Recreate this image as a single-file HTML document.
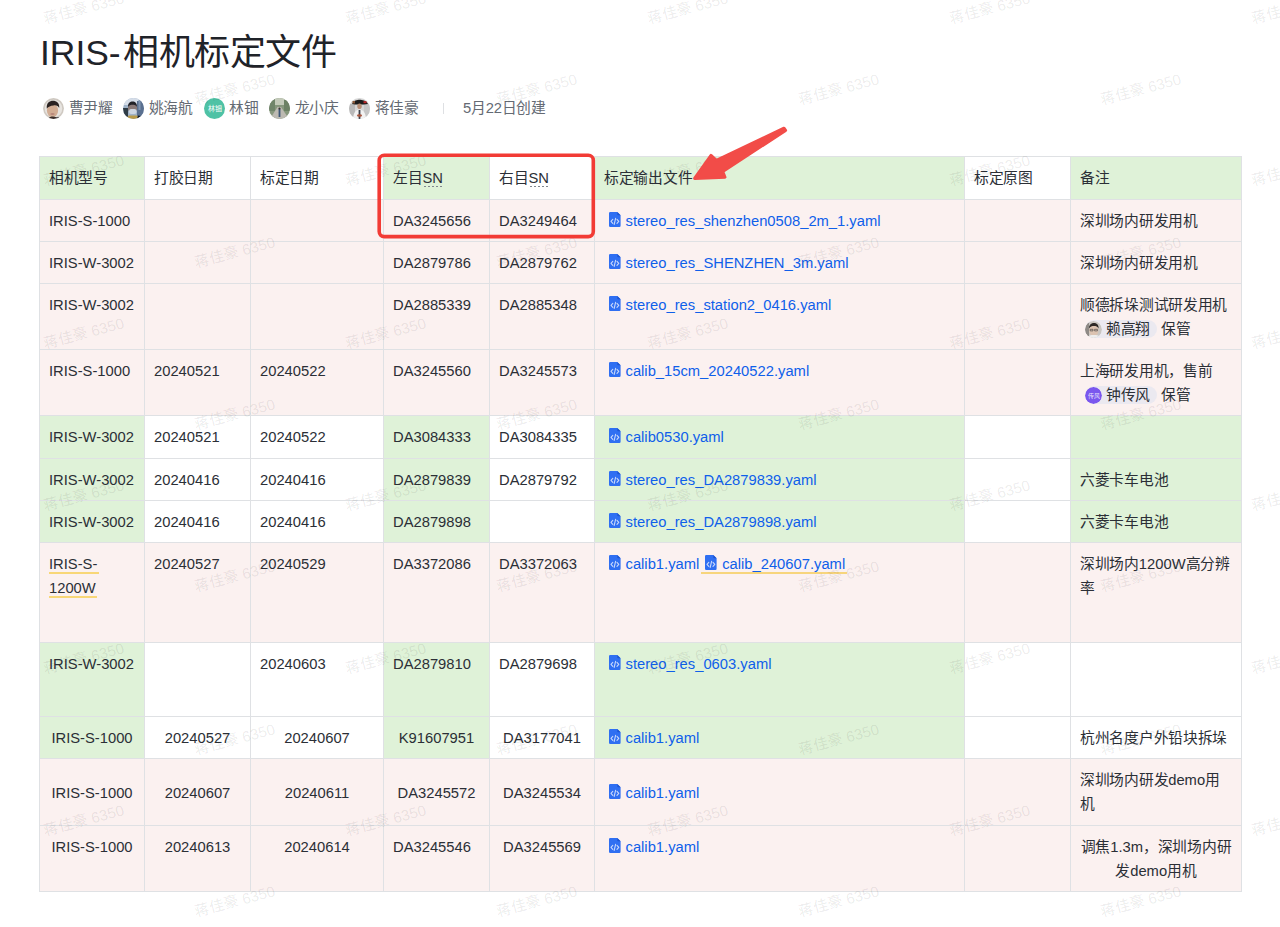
<!DOCTYPE html>
<html lang="zh-CN"><head><meta charset="utf-8">
<style>
html,body{margin:0;padding:0;background:#fff;}
body{width:1280px;height:927px;overflow:hidden;position:relative;font-family:"Liberation Sans",sans-serif;color:#1f2329;}
.title{position:absolute;left:40px;top:28px;font-size:36px;line-height:50px;white-space:nowrap;color:#1f2329;}
.meta{position:absolute;left:0;top:96px;height:24px;font-size:14.75px;line-height:24px;color:#646a73;white-space:nowrap;}
.meta span{position:absolute;top:0;letter-spacing:-0.25px;}
.av{position:absolute;width:21px;height:21px;top:1.5px;}
.cb{position:absolute;}
.ln{position:absolute;background:#dfe1e4;}
.cell{position:absolute;box-sizing:border-box;padding:9px 9px 8px 9px;font-size:14.75px;line-height:24px;display:flex;flex-direction:column;color:#2b2f36;}
.cell.top{justify-content:flex-start;}
.cell.middle{justify-content:center;}
.ci{white-space:nowrap;}
.cj{letter-spacing:-0.3px;}
.lk{color:#0f5fea;white-space:nowrap;padding-left:4.5px;margin-right:1.4px;}
.fi{display:inline-block;vertical-align:-1px;margin-right:5px;}
.ul .lt, .ul{}
.ul{border-bottom:2px solid #f7d57c;padding-bottom:0px;padding-right:1.6px;}
.yl{border-bottom:2px solid #f8d777;padding-right:1.2px;}
.dot{position:relative;display:inline-block;}
.dot::after{content:"";position:absolute;left:1.5px;right:-1px;top:20px;height:1px;background-image:linear-gradient(90deg,#80868e 0 2px,transparent 2px 4px);background-size:4px 1px;background-repeat:repeat-x;}
.mt{display:inline-block;background:#ebe9f0;border-radius:10px;height:18px;line-height:18px;padding:0 6.7px 0 0;margin-left:5px;vertical-align:0px;}
.mav{display:inline-block;width:17px;height:17px;border-radius:50%;vertical-align:-4px;margin-right:4px;}
.av-lai{background:radial-gradient(circle at 50% 60%, #d9c1ae 0 30%, #5b5450 45%, #c9c9c9 70%);}
.av-zhong{background:#7b5cf0;}
.wm{position:absolute;font-size:15px;line-height:16px;color:rgba(0,0,0,0.085);transform:rotate(-15deg);transform-origin:0 100%;white-space:nowrap;pointer-events:none;}
.anno{position:absolute;left:0;top:0;}
</style></head><body>
<div class="title"><span style="font-size:35.4px">IRIS-</span><span style="letter-spacing:-0.45px;margin-left:2.5px">相机标定文件</span></div>
<div class="meta">
<svg class="av" style="left:43px" width="21" height="21" viewBox="0 0 21 21"><defs><clipPath id="c1"><circle cx="10.5" cy="10.5" r="10.5"/></clipPath><filter id="b1" x="-20%" y="-20%" width="140%" height="140%"><feGaussianBlur stdDeviation="0.55"/></filter></defs><g clip-path="url(#c1)"><rect width="21" height="21" fill="#e7e4e0"/><g filter="url(#b1)"><circle cx="10.5" cy="10.5" r="9.6" fill="none" stroke="#cfc9c2" stroke-width="1.6"/><ellipse cx="9.5" cy="12.5" rx="5.6" ry="6.6" fill="#d2ad94"/><path d="M3.8 10.5C3.2 5 6.5 2.8 10 2.8S16.8 4.8 16.2 10C15 8 13.5 7 10.5 7.4S5.5 8.5 3.8 10.5z" fill="#2a2421"/><ellipse cx="9.5" cy="16" rx="2.2" ry="1" fill="#a8706a" opacity="0.6"/><path d="M5 21C6 19 8 18.6 10 18.6S15 19.5 17 21z" fill="#3a2f2c"/><path d="M13 21L15 19L18 20L18 21z" fill="#1f2230"/></g></g></svg>
<span style="left:68.5px">曹尹耀</span>
<svg class="av" style="left:123px" width="21" height="21" viewBox="0 0 21 21"><defs><clipPath id="c2"><circle cx="10.5" cy="10.5" r="10.5"/></clipPath><filter id="b2" x="-20%" y="-20%" width="140%" height="140%"><feGaussianBlur stdDeviation="0.6"/></filter></defs><g clip-path="url(#c2)"><rect width="21" height="21" fill="#9fb2c8"/><g filter="url(#b2)"><rect x="0" y="0" width="21" height="7" fill="#d5dde8"/><rect x="14" y="3" width="7" height="18" fill="#5a7090"/><rect x="15.5" y="2" width="2" height="10" fill="#8096b2"/><rect x="0" y="10" width="5" height="11" fill="#2e3a44"/><ellipse cx="9.5" cy="10" rx="4.6" ry="5.5" fill="#8a7a78"/><path d="M5 9C5 5 7 3.6 9.6 3.6S14 5 14 9C13 7.2 11.5 6.8 9.6 6.8S6 7.2 5 9z" fill="#202028"/><rect x="6" y="11" width="7.5" height="5" rx="2" fill="#cdd6e2"/><path d="M3 21L5.5 17.5H14L17 21z" fill="#b89a48"/><path d="M14 21L15 17.5L18 18L18 21z" fill="#111820"/></g></g></svg>
<span style="left:148.5px">姚海航</span>
<svg class="av" style="left:203.5px" width="21" height="21" viewBox="0 0 21 21"><circle cx="10.5" cy="10.5" r="10.5" fill="#4fc2a5"/><text x="10.5" y="13.2" font-size="7" fill="#fff" text-anchor="middle" font-family="Liberation Sans,sans-serif">林钿</text></svg>
<span style="left:229px">林钿</span>
<svg class="av" style="left:269px" width="21" height="21" viewBox="0 0 21 21"><defs><clipPath id="c4"><circle cx="10.5" cy="10.5" r="10.5"/></clipPath></defs><g clip-path="url(#c4)"><rect width="21" height="21" fill="#86977c"/><rect x="6" y="0" width="9" height="7" fill="#c3cab9"/><rect x="0" y="0" width="6" height="13" fill="#70856a"/><rect x="15" y="2" width="6" height="11" fill="#6c8164"/><path d="M1 21L8.5 9H12L20 21z" fill="#bdbab2"/><rect x="9.6" y="11" width="1.8" height="8" fill="#3d5675"/><circle cx="10.5" cy="10.5" r="1.1" fill="#3a3430"/></g></svg>
<span style="left:294.5px">龙小庆</span>
<svg class="av" style="left:348.5px" width="21" height="21" viewBox="0 0 21 21"><defs><clipPath id="c5"><circle cx="10.5" cy="10.5" r="10.5"/></clipPath><filter id="b5" x="-20%" y="-20%" width="140%" height="140%"><feGaussianBlur stdDeviation="0.5"/></filter></defs><g clip-path="url(#c5)"><rect width="21" height="21" fill="#d6d6d6"/><g filter="url(#b5)"><rect x="0" y="6" width="6" height="15" fill="#b9b9b9"/><rect x="15" y="6" width="6" height="15" fill="#c6c6c6"/><path d="M3 6C5 2.5 8 1.8 10.5 1.8S17 2.5 19 6L15 6.5L6 6.5z" fill="#1c1c1c"/><rect x="14.5" y="3.2" width="3" height="2" fill="#c0282a"/><rect x="3.5" y="3" width="2.5" height="2.5" fill="#8a5a3a"/><ellipse cx="10.5" cy="8.2" rx="2.2" ry="2.8" fill="#b88e74"/><path d="M4 21C4.5 14 7 11.8 10.5 11.8S16.5 14 17 21z" fill="#f2f2f2"/><rect x="9.6" y="12" width="1.8" height="9" fill="#3b3f4a"/><ellipse cx="10.5" cy="17.5" rx="2.6" ry="1.2" fill="#a8563e"/></g></g></svg>
<span style="left:374.5px">蒋佳豪</span>
<div style="position:absolute;left:443px;top:7px;width:1px;height:11px;background:#dee0e3"></div>
<span style="left:463px">5月22日创建</span>
</div>
<div class="cb" style="left:39px;top:156px;width:105px;height:43px;background:#dff2d8"></div>
<div class="cb" style="left:144px;top:156px;width:106px;height:43px;background:#ffffff"></div>
<div class="cb" style="left:250px;top:156px;width:133px;height:43px;background:#ffffff"></div>
<div class="cb" style="left:383px;top:156px;width:106px;height:43px;background:#dff2d8"></div>
<div class="cb" style="left:489px;top:156px;width:105px;height:43px;background:#ffffff"></div>
<div class="cb" style="left:594px;top:156px;width:370px;height:43px;background:#dff2d8"></div>
<div class="cb" style="left:964px;top:156px;width:106px;height:43px;background:#ffffff"></div>
<div class="cb" style="left:1070px;top:156px;width:171px;height:43px;background:#dff2d8"></div>
<div class="cb" style="left:39px;top:199px;width:105px;height:42px;background:#fbf1f0"></div>
<div class="cb" style="left:144px;top:199px;width:106px;height:42px;background:#fbf1f0"></div>
<div class="cb" style="left:250px;top:199px;width:133px;height:42px;background:#fbf1f0"></div>
<div class="cb" style="left:383px;top:199px;width:106px;height:42px;background:#fbf1f0"></div>
<div class="cb" style="left:489px;top:199px;width:105px;height:42px;background:#fbf1f0"></div>
<div class="cb" style="left:594px;top:199px;width:370px;height:42px;background:#fbf1f0"></div>
<div class="cb" style="left:964px;top:199px;width:106px;height:42px;background:#fbf1f0"></div>
<div class="cb" style="left:1070px;top:199px;width:171px;height:42px;background:#fbf1f0"></div>
<div class="cb" style="left:39px;top:241px;width:105px;height:42px;background:#fbf1f0"></div>
<div class="cb" style="left:144px;top:241px;width:106px;height:42px;background:#fbf1f0"></div>
<div class="cb" style="left:250px;top:241px;width:133px;height:42px;background:#fbf1f0"></div>
<div class="cb" style="left:383px;top:241px;width:106px;height:42px;background:#fbf1f0"></div>
<div class="cb" style="left:489px;top:241px;width:105px;height:42px;background:#fbf1f0"></div>
<div class="cb" style="left:594px;top:241px;width:370px;height:42px;background:#fbf1f0"></div>
<div class="cb" style="left:964px;top:241px;width:106px;height:42px;background:#fbf1f0"></div>
<div class="cb" style="left:1070px;top:241px;width:171px;height:42px;background:#fbf1f0"></div>
<div class="cb" style="left:39px;top:283px;width:105px;height:66px;background:#fbf1f0"></div>
<div class="cb" style="left:144px;top:283px;width:106px;height:66px;background:#fbf1f0"></div>
<div class="cb" style="left:250px;top:283px;width:133px;height:66px;background:#fbf1f0"></div>
<div class="cb" style="left:383px;top:283px;width:106px;height:66px;background:#fbf1f0"></div>
<div class="cb" style="left:489px;top:283px;width:105px;height:66px;background:#fbf1f0"></div>
<div class="cb" style="left:594px;top:283px;width:370px;height:66px;background:#fbf1f0"></div>
<div class="cb" style="left:964px;top:283px;width:106px;height:66px;background:#fbf1f0"></div>
<div class="cb" style="left:1070px;top:283px;width:171px;height:66px;background:#fbf1f0"></div>
<div class="cb" style="left:39px;top:349px;width:105px;height:66px;background:#fbf1f0"></div>
<div class="cb" style="left:144px;top:349px;width:106px;height:66px;background:#fbf1f0"></div>
<div class="cb" style="left:250px;top:349px;width:133px;height:66px;background:#fbf1f0"></div>
<div class="cb" style="left:383px;top:349px;width:106px;height:66px;background:#fbf1f0"></div>
<div class="cb" style="left:489px;top:349px;width:105px;height:66px;background:#fbf1f0"></div>
<div class="cb" style="left:594px;top:349px;width:370px;height:66px;background:#fbf1f0"></div>
<div class="cb" style="left:964px;top:349px;width:106px;height:66px;background:#fbf1f0"></div>
<div class="cb" style="left:1070px;top:349px;width:171px;height:66px;background:#fbf1f0"></div>
<div class="cb" style="left:39px;top:415px;width:105px;height:43px;background:#dff2d8"></div>
<div class="cb" style="left:144px;top:415px;width:106px;height:43px;background:#ffffff"></div>
<div class="cb" style="left:250px;top:415px;width:133px;height:43px;background:#ffffff"></div>
<div class="cb" style="left:383px;top:415px;width:106px;height:43px;background:#dff2d8"></div>
<div class="cb" style="left:489px;top:415px;width:105px;height:43px;background:#ffffff"></div>
<div class="cb" style="left:594px;top:415px;width:370px;height:43px;background:#dff2d8"></div>
<div class="cb" style="left:964px;top:415px;width:106px;height:43px;background:#ffffff"></div>
<div class="cb" style="left:1070px;top:415px;width:171px;height:43px;background:#dff2d8"></div>
<div class="cb" style="left:39px;top:458px;width:105px;height:42px;background:#dff2d8"></div>
<div class="cb" style="left:144px;top:458px;width:106px;height:42px;background:#ffffff"></div>
<div class="cb" style="left:250px;top:458px;width:133px;height:42px;background:#ffffff"></div>
<div class="cb" style="left:383px;top:458px;width:106px;height:42px;background:#dff2d8"></div>
<div class="cb" style="left:489px;top:458px;width:105px;height:42px;background:#ffffff"></div>
<div class="cb" style="left:594px;top:458px;width:370px;height:42px;background:#dff2d8"></div>
<div class="cb" style="left:964px;top:458px;width:106px;height:42px;background:#ffffff"></div>
<div class="cb" style="left:1070px;top:458px;width:171px;height:42px;background:#dff2d8"></div>
<div class="cb" style="left:39px;top:500px;width:105px;height:42px;background:#dff2d8"></div>
<div class="cb" style="left:144px;top:500px;width:106px;height:42px;background:#ffffff"></div>
<div class="cb" style="left:250px;top:500px;width:133px;height:42px;background:#ffffff"></div>
<div class="cb" style="left:383px;top:500px;width:106px;height:42px;background:#dff2d8"></div>
<div class="cb" style="left:489px;top:500px;width:105px;height:42px;background:#ffffff"></div>
<div class="cb" style="left:594px;top:500px;width:370px;height:42px;background:#dff2d8"></div>
<div class="cb" style="left:964px;top:500px;width:106px;height:42px;background:#ffffff"></div>
<div class="cb" style="left:1070px;top:500px;width:171px;height:42px;background:#dff2d8"></div>
<div class="cb" style="left:39px;top:542px;width:105px;height:100px;background:#fbf1f0"></div>
<div class="cb" style="left:144px;top:542px;width:106px;height:100px;background:#fbf1f0"></div>
<div class="cb" style="left:250px;top:542px;width:133px;height:100px;background:#fbf1f0"></div>
<div class="cb" style="left:383px;top:542px;width:106px;height:100px;background:#fbf1f0"></div>
<div class="cb" style="left:489px;top:542px;width:105px;height:100px;background:#fbf1f0"></div>
<div class="cb" style="left:594px;top:542px;width:370px;height:100px;background:#fbf1f0"></div>
<div class="cb" style="left:964px;top:542px;width:106px;height:100px;background:#fbf1f0"></div>
<div class="cb" style="left:1070px;top:542px;width:171px;height:100px;background:#fbf1f0"></div>
<div class="cb" style="left:39px;top:642px;width:105px;height:74px;background:#dff2d8"></div>
<div class="cb" style="left:144px;top:642px;width:106px;height:74px;background:#ffffff"></div>
<div class="cb" style="left:250px;top:642px;width:133px;height:74px;background:#ffffff"></div>
<div class="cb" style="left:383px;top:642px;width:106px;height:74px;background:#dff2d8"></div>
<div class="cb" style="left:489px;top:642px;width:105px;height:74px;background:#ffffff"></div>
<div class="cb" style="left:594px;top:642px;width:370px;height:74px;background:#dff2d8"></div>
<div class="cb" style="left:964px;top:642px;width:106px;height:74px;background:#ffffff"></div>
<div class="cb" style="left:1070px;top:642px;width:171px;height:74px;background:#ffffff"></div>
<div class="cb" style="left:39px;top:716px;width:105px;height:42px;background:#dff2d8"></div>
<div class="cb" style="left:144px;top:716px;width:106px;height:42px;background:#ffffff"></div>
<div class="cb" style="left:250px;top:716px;width:133px;height:42px;background:#ffffff"></div>
<div class="cb" style="left:383px;top:716px;width:106px;height:42px;background:#dff2d8"></div>
<div class="cb" style="left:489px;top:716px;width:105px;height:42px;background:#ffffff"></div>
<div class="cb" style="left:594px;top:716px;width:370px;height:42px;background:#dff2d8"></div>
<div class="cb" style="left:964px;top:716px;width:106px;height:42px;background:#ffffff"></div>
<div class="cb" style="left:1070px;top:716px;width:171px;height:42px;background:#ffffff"></div>
<div class="cb" style="left:39px;top:758px;width:105px;height:67px;background:#fbf1f0"></div>
<div class="cb" style="left:144px;top:758px;width:106px;height:67px;background:#fbf1f0"></div>
<div class="cb" style="left:250px;top:758px;width:133px;height:67px;background:#fbf1f0"></div>
<div class="cb" style="left:383px;top:758px;width:106px;height:67px;background:#fbf1f0"></div>
<div class="cb" style="left:489px;top:758px;width:105px;height:67px;background:#fbf1f0"></div>
<div class="cb" style="left:594px;top:758px;width:370px;height:67px;background:#fbf1f0"></div>
<div class="cb" style="left:964px;top:758px;width:106px;height:67px;background:#fbf1f0"></div>
<div class="cb" style="left:1070px;top:758px;width:171px;height:67px;background:#fbf1f0"></div>
<div class="cb" style="left:39px;top:825px;width:105px;height:66px;background:#fbf1f0"></div>
<div class="cb" style="left:144px;top:825px;width:106px;height:66px;background:#fbf1f0"></div>
<div class="cb" style="left:250px;top:825px;width:133px;height:66px;background:#fbf1f0"></div>
<div class="cb" style="left:383px;top:825px;width:106px;height:66px;background:#fbf1f0"></div>
<div class="cb" style="left:489px;top:825px;width:105px;height:66px;background:#fbf1f0"></div>
<div class="cb" style="left:594px;top:825px;width:370px;height:66px;background:#fbf1f0"></div>
<div class="cb" style="left:964px;top:825px;width:106px;height:66px;background:#fbf1f0"></div>
<div class="cb" style="left:1070px;top:825px;width:171px;height:66px;background:#fbf1f0"></div>
<div class="cell top" style="left:40px;top:157px;width:104px;height:42px;text-align:left"><div class="ci"><span class="cj">相机型号</span></div></div>
<div class="cell top" style="left:145px;top:157px;width:105px;height:42px;text-align:left"><div class="ci"><span class="cj">打胶日期</span></div></div>
<div class="cell top" style="left:251px;top:157px;width:132px;height:42px;text-align:left"><div class="ci"><span class="cj">标定日期</span></div></div>
<div class="cell top" style="left:384px;top:157px;width:105px;height:42px;text-align:left"><div class="ci"><span class="cj">左目</span><span class="dot">SN</span></div></div>
<div class="cell top" style="left:490px;top:157px;width:104px;height:42px;text-align:left"><div class="ci"><span class="cj">右目</span><span class="dot">SN</span></div></div>
<div class="cell top" style="left:595px;top:157px;width:369px;height:42px;text-align:left"><div class="ci"><span class="cj">标定输出文件</span></div></div>
<div class="cell top" style="left:965px;top:157px;width:105px;height:42px;text-align:left"><div class="ci"><span class="cj">标定原图</span></div></div>
<div class="cell top" style="left:1071px;top:157px;width:170px;height:42px;text-align:left"><div class="ci"><span class="cj">备注</span></div></div>
<div class="cell top" style="left:40px;top:200px;width:104px;height:41px;text-align:left"><div class="ci">IRIS-S-1000</div></div>
<div class="cell top" style="left:384px;top:200px;width:105px;height:41px;text-align:left"><div class="ci">DA3245656</div></div>
<div class="cell top" style="left:490px;top:200px;width:104px;height:41px;text-align:left"><div class="ci">DA3249464</div></div>
<div class="cell top" style="left:595px;top:200px;width:369px;height:41px;text-align:left"><div class="ci"><span class="lk"><svg class="fi" width="12" height="15" viewBox="0 0 12 15"><path d="M1.2 0H8.3L11.6 3.3V13.8a1.2 1.2 0 0 1-1.2 1.2H1.2A1.2 1.2 0 0 1 0 13.8V1.2A1.2 1.2 0 0 1 1.2 0z" fill="#2f6ff2"/><path d="M8.3 0V2.5a0.8 0.8 0 0 0 0.8 0.8H11.6z" fill="#1d55d0"/><path d="M3.8 7.4L2 9.4l1.8 2M8 7.4L9.8 9.4 8 11.4M6.6 6.4L5.2 12.4" stroke="#c9d8fb" stroke-width="1.1" fill="none" stroke-linecap="round" stroke-linejoin="round"/></svg><span class="lt">stereo_res_shenzhen0508_2m_1.yaml</span></span></div></div>
<div class="cell top" style="left:1071px;top:200px;width:170px;height:41px;text-align:left"><div class="ci"><span class="cj">深圳场内研发用机</span></div></div>
<div class="cell top" style="left:40px;top:242px;width:104px;height:41px;text-align:left"><div class="ci">IRIS-W-3002</div></div>
<div class="cell top" style="left:384px;top:242px;width:105px;height:41px;text-align:left"><div class="ci">DA2879786</div></div>
<div class="cell top" style="left:490px;top:242px;width:104px;height:41px;text-align:left"><div class="ci">DA2879762</div></div>
<div class="cell top" style="left:595px;top:242px;width:369px;height:41px;text-align:left"><div class="ci"><span class="lk"><svg class="fi" width="12" height="15" viewBox="0 0 12 15"><path d="M1.2 0H8.3L11.6 3.3V13.8a1.2 1.2 0 0 1-1.2 1.2H1.2A1.2 1.2 0 0 1 0 13.8V1.2A1.2 1.2 0 0 1 1.2 0z" fill="#2f6ff2"/><path d="M8.3 0V2.5a0.8 0.8 0 0 0 0.8 0.8H11.6z" fill="#1d55d0"/><path d="M3.8 7.4L2 9.4l1.8 2M8 7.4L9.8 9.4 8 11.4M6.6 6.4L5.2 12.4" stroke="#c9d8fb" stroke-width="1.1" fill="none" stroke-linecap="round" stroke-linejoin="round"/></svg><span class="lt">stereo_res_SHENZHEN_3m.yaml</span></span></div></div>
<div class="cell top" style="left:1071px;top:242px;width:170px;height:41px;text-align:left"><div class="ci"><span class="cj">深圳场内研发用机</span></div></div>
<div class="cell top" style="left:40px;top:284px;width:104px;height:65px;text-align:left"><div class="ci">IRIS-W-3002</div></div>
<div class="cell top" style="left:384px;top:284px;width:105px;height:65px;text-align:left"><div class="ci">DA2885339</div></div>
<div class="cell top" style="left:490px;top:284px;width:104px;height:65px;text-align:left"><div class="ci">DA2885348</div></div>
<div class="cell top" style="left:595px;top:284px;width:369px;height:65px;text-align:left"><div class="ci"><span class="lk"><svg class="fi" width="12" height="15" viewBox="0 0 12 15"><path d="M1.2 0H8.3L11.6 3.3V13.8a1.2 1.2 0 0 1-1.2 1.2H1.2A1.2 1.2 0 0 1 0 13.8V1.2A1.2 1.2 0 0 1 1.2 0z" fill="#2f6ff2"/><path d="M8.3 0V2.5a0.8 0.8 0 0 0 0.8 0.8H11.6z" fill="#1d55d0"/><path d="M3.8 7.4L2 9.4l1.8 2M8 7.4L9.8 9.4 8 11.4M6.6 6.4L5.2 12.4" stroke="#c9d8fb" stroke-width="1.1" fill="none" stroke-linecap="round" stroke-linejoin="round"/></svg><span class="lt">stereo_res_station2_0416.yaml</span></span></div></div>
<div class="cell top" style="left:1071px;top:284px;width:170px;height:65px;text-align:left"><div class="ci"><span class="cj">顺德拆垛测试研发用机</span><br><span class="mt"><svg class="mav" width="17" height="17" viewBox="0 0 17 17"><defs><clipPath id="cl"><circle cx="8.5" cy="8.5" r="8.5"/></clipPath></defs><g clip-path="url(#cl)"><rect width="17" height="17" fill="#c9c6c2"/><rect x="0" y="0" width="4" height="17" fill="#8f8a86"/><ellipse cx="8.8" cy="9.5" rx="4.6" ry="5.6" fill="#dcc3b1"/><path d="M4 7.5C4 3.5 6.5 2 9 2S13.8 3.5 13.6 7.5C12.5 5.5 11 5 9 5S5.2 5.5 4 7.5z" fill="#2c2826"/><path d="M5.2 8.3h2.8v1.6H5.2zM9.6 8.3h2.8v1.6H9.6z" fill="none" stroke="#3a3a3a" stroke-width="0.6"/><path d="M2 17C3 14.5 6 14 8.8 14S15 14.5 16 17z" fill="#eeeeee"/></g></svg><span class="cj">赖高翔</span></span> <span class="cj">保管</span></div></div>
<div class="cell top" style="left:40px;top:350px;width:104px;height:65px;text-align:left"><div class="ci">IRIS-S-1000</div></div>
<div class="cell top" style="left:145px;top:350px;width:105px;height:65px;text-align:left"><div class="ci">20240521</div></div>
<div class="cell top" style="left:251px;top:350px;width:132px;height:65px;text-align:left"><div class="ci">20240522</div></div>
<div class="cell top" style="left:384px;top:350px;width:105px;height:65px;text-align:left"><div class="ci">DA3245560</div></div>
<div class="cell top" style="left:490px;top:350px;width:104px;height:65px;text-align:left"><div class="ci">DA3245573</div></div>
<div class="cell top" style="left:595px;top:350px;width:369px;height:65px;text-align:left"><div class="ci"><span class="lk"><svg class="fi" width="12" height="15" viewBox="0 0 12 15"><path d="M1.2 0H8.3L11.6 3.3V13.8a1.2 1.2 0 0 1-1.2 1.2H1.2A1.2 1.2 0 0 1 0 13.8V1.2A1.2 1.2 0 0 1 1.2 0z" fill="#2f6ff2"/><path d="M8.3 0V2.5a0.8 0.8 0 0 0 0.8 0.8H11.6z" fill="#1d55d0"/><path d="M3.8 7.4L2 9.4l1.8 2M8 7.4L9.8 9.4 8 11.4M6.6 6.4L5.2 12.4" stroke="#c9d8fb" stroke-width="1.1" fill="none" stroke-linecap="round" stroke-linejoin="round"/></svg><span class="lt">calib_15cm_20240522.yaml</span></span></div></div>
<div class="cell top" style="left:1071px;top:350px;width:170px;height:65px;text-align:left"><div class="ci"><span class="cj">上海研发用机，售前</span><br><span class="mt"><svg class="mav" width="17" height="17" viewBox="0 0 17 17"><circle cx="8.5" cy="8.5" r="8.5" fill="#7b57ee"/><text x="8.5" y="11" font-size="6" fill="#fff" fill-opacity="0.85" text-anchor="middle" font-family="Liberation Sans,sans-serif">传风</text></svg><span class="cj">钟传风</span></span> <span class="cj">保管</span></div></div>
<div class="cell top" style="left:40px;top:416px;width:104px;height:42px;text-align:left"><div class="ci">IRIS-W-3002</div></div>
<div class="cell top" style="left:145px;top:416px;width:105px;height:42px;text-align:left"><div class="ci">20240521</div></div>
<div class="cell top" style="left:251px;top:416px;width:132px;height:42px;text-align:left"><div class="ci">20240522</div></div>
<div class="cell top" style="left:384px;top:416px;width:105px;height:42px;text-align:left"><div class="ci">DA3084333</div></div>
<div class="cell top" style="left:490px;top:416px;width:104px;height:42px;text-align:left"><div class="ci">DA3084335</div></div>
<div class="cell top" style="left:595px;top:416px;width:369px;height:42px;text-align:left"><div class="ci"><span class="lk"><svg class="fi" width="12" height="15" viewBox="0 0 12 15"><path d="M1.2 0H8.3L11.6 3.3V13.8a1.2 1.2 0 0 1-1.2 1.2H1.2A1.2 1.2 0 0 1 0 13.8V1.2A1.2 1.2 0 0 1 1.2 0z" fill="#2f6ff2"/><path d="M8.3 0V2.5a0.8 0.8 0 0 0 0.8 0.8H11.6z" fill="#1d55d0"/><path d="M3.8 7.4L2 9.4l1.8 2M8 7.4L9.8 9.4 8 11.4M6.6 6.4L5.2 12.4" stroke="#c9d8fb" stroke-width="1.1" fill="none" stroke-linecap="round" stroke-linejoin="round"/></svg><span class="lt">calib0530.yaml</span></span></div></div>
<div class="cell top" style="left:40px;top:459px;width:104px;height:41px;text-align:left"><div class="ci">IRIS-W-3002</div></div>
<div class="cell top" style="left:145px;top:459px;width:105px;height:41px;text-align:left"><div class="ci">20240416</div></div>
<div class="cell top" style="left:251px;top:459px;width:132px;height:41px;text-align:left"><div class="ci">20240416</div></div>
<div class="cell top" style="left:384px;top:459px;width:105px;height:41px;text-align:left"><div class="ci">DA2879839</div></div>
<div class="cell top" style="left:490px;top:459px;width:104px;height:41px;text-align:left"><div class="ci">DA2879792</div></div>
<div class="cell top" style="left:595px;top:459px;width:369px;height:41px;text-align:left"><div class="ci"><span class="lk"><svg class="fi" width="12" height="15" viewBox="0 0 12 15"><path d="M1.2 0H8.3L11.6 3.3V13.8a1.2 1.2 0 0 1-1.2 1.2H1.2A1.2 1.2 0 0 1 0 13.8V1.2A1.2 1.2 0 0 1 1.2 0z" fill="#2f6ff2"/><path d="M8.3 0V2.5a0.8 0.8 0 0 0 0.8 0.8H11.6z" fill="#1d55d0"/><path d="M3.8 7.4L2 9.4l1.8 2M8 7.4L9.8 9.4 8 11.4M6.6 6.4L5.2 12.4" stroke="#c9d8fb" stroke-width="1.1" fill="none" stroke-linecap="round" stroke-linejoin="round"/></svg><span class="lt">stereo_res_DA2879839.yaml</span></span></div></div>
<div class="cell top" style="left:1071px;top:459px;width:170px;height:41px;text-align:left"><div class="ci"><span class="cj">六菱卡车电池</span></div></div>
<div class="cell top" style="left:40px;top:501px;width:104px;height:41px;text-align:left"><div class="ci">IRIS-W-3002</div></div>
<div class="cell top" style="left:145px;top:501px;width:105px;height:41px;text-align:left"><div class="ci">20240416</div></div>
<div class="cell top" style="left:251px;top:501px;width:132px;height:41px;text-align:left"><div class="ci">20240416</div></div>
<div class="cell top" style="left:384px;top:501px;width:105px;height:41px;text-align:left"><div class="ci">DA2879898</div></div>
<div class="cell top" style="left:595px;top:501px;width:369px;height:41px;text-align:left"><div class="ci"><span class="lk"><svg class="fi" width="12" height="15" viewBox="0 0 12 15"><path d="M1.2 0H8.3L11.6 3.3V13.8a1.2 1.2 0 0 1-1.2 1.2H1.2A1.2 1.2 0 0 1 0 13.8V1.2A1.2 1.2 0 0 1 1.2 0z" fill="#2f6ff2"/><path d="M8.3 0V2.5a0.8 0.8 0 0 0 0.8 0.8H11.6z" fill="#1d55d0"/><path d="M3.8 7.4L2 9.4l1.8 2M8 7.4L9.8 9.4 8 11.4M6.6 6.4L5.2 12.4" stroke="#c9d8fb" stroke-width="1.1" fill="none" stroke-linecap="round" stroke-linejoin="round"/></svg><span class="lt">stereo_res_DA2879898.yaml</span></span></div></div>
<div class="cell top" style="left:1071px;top:501px;width:170px;height:41px;text-align:left"><div class="ci"><span class="cj">六菱卡车电池</span></div></div>
<div class="cell top" style="left:40px;top:543px;width:104px;height:99px;text-align:left"><div class="ci"><span class="yl">IRIS-S-</span><br><span class="yl">1200W</span></div></div>
<div class="cell top" style="left:145px;top:543px;width:105px;height:99px;text-align:left"><div class="ci">20240527</div></div>
<div class="cell top" style="left:251px;top:543px;width:132px;height:99px;text-align:left"><div class="ci">20240529</div></div>
<div class="cell top" style="left:384px;top:543px;width:105px;height:99px;text-align:left"><div class="ci">DA3372086</div></div>
<div class="cell top" style="left:490px;top:543px;width:104px;height:99px;text-align:left"><div class="ci">DA3372063</div></div>
<div class="cell top" style="left:595px;top:543px;width:369px;height:99px;text-align:left"><div class="ci"><span class="lk"><svg class="fi" width="12" height="15" viewBox="0 0 12 15"><path d="M1.2 0H8.3L11.6 3.3V13.8a1.2 1.2 0 0 1-1.2 1.2H1.2A1.2 1.2 0 0 1 0 13.8V1.2A1.2 1.2 0 0 1 1.2 0z" fill="#2f6ff2"/><path d="M8.3 0V2.5a0.8 0.8 0 0 0 0.8 0.8H11.6z" fill="#1d55d0"/><path d="M3.8 7.4L2 9.4l1.8 2M8 7.4L9.8 9.4 8 11.4M6.6 6.4L5.2 12.4" stroke="#c9d8fb" stroke-width="1.1" fill="none" stroke-linecap="round" stroke-linejoin="round"/></svg><span class="lt">calib1.yaml</span></span><span class="lk ul"><svg class="fi" width="12" height="15" viewBox="0 0 12 15"><path d="M1.2 0H8.3L11.6 3.3V13.8a1.2 1.2 0 0 1-1.2 1.2H1.2A1.2 1.2 0 0 1 0 13.8V1.2A1.2 1.2 0 0 1 1.2 0z" fill="#2f6ff2"/><path d="M8.3 0V2.5a0.8 0.8 0 0 0 0.8 0.8H11.6z" fill="#1d55d0"/><path d="M3.8 7.4L2 9.4l1.8 2M8 7.4L9.8 9.4 8 11.4M6.6 6.4L5.2 12.4" stroke="#c9d8fb" stroke-width="1.1" fill="none" stroke-linecap="round" stroke-linejoin="round"/></svg><span class="lt">calib_240607.yaml</span></span></div></div>
<div class="cell top" style="left:1071px;top:543px;width:170px;height:99px;text-align:left"><div class="ci"><span class="cj">深圳场内</span>1200W<span class="cj">高分辨</span><br><span class="cj">率</span></div></div>
<div class="cell top" style="left:40px;top:643px;width:104px;height:73px;text-align:left"><div class="ci">IRIS-W-3002</div></div>
<div class="cell top" style="left:251px;top:643px;width:132px;height:73px;text-align:left"><div class="ci">20240603</div></div>
<div class="cell top" style="left:384px;top:643px;width:105px;height:73px;text-align:left"><div class="ci">DA2879810</div></div>
<div class="cell top" style="left:490px;top:643px;width:104px;height:73px;text-align:left"><div class="ci">DA2879698</div></div>
<div class="cell top" style="left:595px;top:643px;width:369px;height:73px;text-align:left"><div class="ci"><span class="lk"><svg class="fi" width="12" height="15" viewBox="0 0 12 15"><path d="M1.2 0H8.3L11.6 3.3V13.8a1.2 1.2 0 0 1-1.2 1.2H1.2A1.2 1.2 0 0 1 0 13.8V1.2A1.2 1.2 0 0 1 1.2 0z" fill="#2f6ff2"/><path d="M8.3 0V2.5a0.8 0.8 0 0 0 0.8 0.8H11.6z" fill="#1d55d0"/><path d="M3.8 7.4L2 9.4l1.8 2M8 7.4L9.8 9.4 8 11.4M6.6 6.4L5.2 12.4" stroke="#c9d8fb" stroke-width="1.1" fill="none" stroke-linecap="round" stroke-linejoin="round"/></svg><span class="lt">stereo_res_0603.yaml</span></span></div></div>
<div class="cell top" style="left:40px;top:717px;width:104px;height:41px;text-align:center"><div class="ci">IRIS-S-1000</div></div>
<div class="cell top" style="left:145px;top:717px;width:105px;height:41px;text-align:center"><div class="ci">20240527</div></div>
<div class="cell top" style="left:251px;top:717px;width:132px;height:41px;text-align:center"><div class="ci">20240607</div></div>
<div class="cell top" style="left:384px;top:717px;width:105px;height:41px;text-align:center"><div class="ci">K91607951</div></div>
<div class="cell top" style="left:490px;top:717px;width:104px;height:41px;text-align:center"><div class="ci">DA3177041</div></div>
<div class="cell top" style="left:595px;top:717px;width:369px;height:41px;text-align:left"><div class="ci"><span class="lk"><svg class="fi" width="12" height="15" viewBox="0 0 12 15"><path d="M1.2 0H8.3L11.6 3.3V13.8a1.2 1.2 0 0 1-1.2 1.2H1.2A1.2 1.2 0 0 1 0 13.8V1.2A1.2 1.2 0 0 1 1.2 0z" fill="#2f6ff2"/><path d="M8.3 0V2.5a0.8 0.8 0 0 0 0.8 0.8H11.6z" fill="#1d55d0"/><path d="M3.8 7.4L2 9.4l1.8 2M8 7.4L9.8 9.4 8 11.4M6.6 6.4L5.2 12.4" stroke="#c9d8fb" stroke-width="1.1" fill="none" stroke-linecap="round" stroke-linejoin="round"/></svg><span class="lt">calib1.yaml</span></span></div></div>
<div class="cell top" style="left:1071px;top:717px;width:170px;height:41px;text-align:left"><div class="ci"><span class="cj">杭州名度户外铅块拆垛</span></div></div>
<div class="cell middle" style="left:40px;top:759px;width:104px;height:66px;text-align:center"><div class="ci">IRIS-S-1000</div></div>
<div class="cell middle" style="left:145px;top:759px;width:105px;height:66px;text-align:center"><div class="ci">20240607</div></div>
<div class="cell middle" style="left:251px;top:759px;width:132px;height:66px;text-align:center"><div class="ci">20240611</div></div>
<div class="cell middle" style="left:384px;top:759px;width:105px;height:66px;text-align:center"><div class="ci">DA3245572</div></div>
<div class="cell middle" style="left:490px;top:759px;width:104px;height:66px;text-align:center"><div class="ci">DA3245534</div></div>
<div class="cell middle" style="left:595px;top:759px;width:369px;height:66px;text-align:left"><div class="ci"><span class="lk"><svg class="fi" width="12" height="15" viewBox="0 0 12 15"><path d="M1.2 0H8.3L11.6 3.3V13.8a1.2 1.2 0 0 1-1.2 1.2H1.2A1.2 1.2 0 0 1 0 13.8V1.2A1.2 1.2 0 0 1 1.2 0z" fill="#2f6ff2"/><path d="M8.3 0V2.5a0.8 0.8 0 0 0 0.8 0.8H11.6z" fill="#1d55d0"/><path d="M3.8 7.4L2 9.4l1.8 2M8 7.4L9.8 9.4 8 11.4M6.6 6.4L5.2 12.4" stroke="#c9d8fb" stroke-width="1.1" fill="none" stroke-linecap="round" stroke-linejoin="round"/></svg><span class="lt">calib1.yaml</span></span></div></div>
<div class="cell top" style="left:1071px;top:759px;width:170px;height:66px;text-align:left"><div class="ci"><span class="cj">深圳场内研发</span>demo<span class="cj">用</span><br><span class="cj">机</span></div></div>
<div class="cell top" style="left:40px;top:826px;width:104px;height:65px;text-align:center"><div class="ci">IRIS-S-1000</div></div>
<div class="cell top" style="left:145px;top:826px;width:105px;height:65px;text-align:center"><div class="ci">20240613</div></div>
<div class="cell top" style="left:251px;top:826px;width:132px;height:65px;text-align:center"><div class="ci">20240614</div></div>
<div class="cell top" style="left:384px;top:826px;width:105px;height:65px;text-align:left"><div class="ci">DA3245546</div></div>
<div class="cell top" style="left:490px;top:826px;width:104px;height:65px;text-align:center"><div class="ci">DA3245569</div></div>
<div class="cell top" style="left:595px;top:826px;width:369px;height:65px;text-align:left"><div class="ci"><span class="lk"><svg class="fi" width="12" height="15" viewBox="0 0 12 15"><path d="M1.2 0H8.3L11.6 3.3V13.8a1.2 1.2 0 0 1-1.2 1.2H1.2A1.2 1.2 0 0 1 0 13.8V1.2A1.2 1.2 0 0 1 1.2 0z" fill="#2f6ff2"/><path d="M8.3 0V2.5a0.8 0.8 0 0 0 0.8 0.8H11.6z" fill="#1d55d0"/><path d="M3.8 7.4L2 9.4l1.8 2M8 7.4L9.8 9.4 8 11.4M6.6 6.4L5.2 12.4" stroke="#c9d8fb" stroke-width="1.1" fill="none" stroke-linecap="round" stroke-linejoin="round"/></svg><span class="lt">calib1.yaml</span></span></div></div>
<div class="cell top" style="left:1071px;top:826px;width:170px;height:65px;text-align:center"><div class="ci"><span class="cj">调焦</span>1.3m<span class="cj">，深圳场内研</span><br><span class="cj">发</span>demo<span class="cj">用机</span></div></div>
<div class="ln" style="left:39px;top:156px;width:1px;height:736px"></div>
<div class="ln" style="left:144px;top:156px;width:1px;height:736px"></div>
<div class="ln" style="left:250px;top:156px;width:1px;height:736px"></div>
<div class="ln" style="left:383px;top:156px;width:1px;height:736px"></div>
<div class="ln" style="left:489px;top:156px;width:1px;height:736px"></div>
<div class="ln" style="left:594px;top:156px;width:1px;height:736px"></div>
<div class="ln" style="left:964px;top:156px;width:1px;height:736px"></div>
<div class="ln" style="left:1070px;top:156px;width:1px;height:736px"></div>
<div class="ln" style="left:1241px;top:156px;width:1px;height:736px"></div>
<div class="ln" style="left:39px;top:156px;width:1203px;height:1px"></div>
<div class="ln" style="left:39px;top:199px;width:1203px;height:1px"></div>
<div class="ln" style="left:39px;top:241px;width:1203px;height:1px"></div>
<div class="ln" style="left:39px;top:283px;width:1203px;height:1px"></div>
<div class="ln" style="left:39px;top:349px;width:1203px;height:1px"></div>
<div class="ln" style="left:39px;top:415px;width:1203px;height:1px"></div>
<div class="ln" style="left:39px;top:458px;width:1203px;height:1px"></div>
<div class="ln" style="left:39px;top:500px;width:1203px;height:1px"></div>
<div class="ln" style="left:39px;top:542px;width:1203px;height:1px"></div>
<div class="ln" style="left:39px;top:642px;width:1203px;height:1px"></div>
<div class="ln" style="left:39px;top:716px;width:1203px;height:1px"></div>
<div class="ln" style="left:39px;top:758px;width:1203px;height:1px"></div>
<div class="ln" style="left:39px;top:825px;width:1203px;height:1px"></div>
<div class="ln" style="left:39px;top:891px;width:1203px;height:1px"></div>
<div class="wm" style="left:-256px;top:-151.4px">蒋佳豪 6350</div>
<div class="wm" style="left:-105px;top:-70.2px">蒋佳豪 6350</div>
<div class="wm" style="left:46px;top:-151.4px">蒋佳豪 6350</div>
<div class="wm" style="left:197px;top:-70.2px">蒋佳豪 6350</div>
<div class="wm" style="left:348px;top:-151.4px">蒋佳豪 6350</div>
<div class="wm" style="left:499px;top:-70.2px">蒋佳豪 6350</div>
<div class="wm" style="left:650px;top:-151.4px">蒋佳豪 6350</div>
<div class="wm" style="left:801px;top:-70.2px">蒋佳豪 6350</div>
<div class="wm" style="left:952px;top:-151.4px">蒋佳豪 6350</div>
<div class="wm" style="left:1103px;top:-70.2px">蒋佳豪 6350</div>
<div class="wm" style="left:1254px;top:-151.4px">蒋佳豪 6350</div>
<div class="wm" style="left:1405px;top:-70.2px">蒋佳豪 6350</div>
<div class="wm" style="left:1556px;top:-151.4px">蒋佳豪 6350</div>
<div class="wm" style="left:1707px;top:-70.2px">蒋佳豪 6350</div>
<div class="wm" style="left:-256px;top:11.0px">蒋佳豪 6350</div>
<div class="wm" style="left:-105px;top:92.2px">蒋佳豪 6350</div>
<div class="wm" style="left:46px;top:11.0px">蒋佳豪 6350</div>
<div class="wm" style="left:197px;top:92.2px">蒋佳豪 6350</div>
<div class="wm" style="left:348px;top:11.0px">蒋佳豪 6350</div>
<div class="wm" style="left:499px;top:92.2px">蒋佳豪 6350</div>
<div class="wm" style="left:650px;top:11.0px">蒋佳豪 6350</div>
<div class="wm" style="left:801px;top:92.2px">蒋佳豪 6350</div>
<div class="wm" style="left:952px;top:11.0px">蒋佳豪 6350</div>
<div class="wm" style="left:1103px;top:92.2px">蒋佳豪 6350</div>
<div class="wm" style="left:1254px;top:11.0px">蒋佳豪 6350</div>
<div class="wm" style="left:1405px;top:92.2px">蒋佳豪 6350</div>
<div class="wm" style="left:1556px;top:11.0px">蒋佳豪 6350</div>
<div class="wm" style="left:1707px;top:92.2px">蒋佳豪 6350</div>
<div class="wm" style="left:-256px;top:173.4px">蒋佳豪 6350</div>
<div class="wm" style="left:-105px;top:254.60000000000002px">蒋佳豪 6350</div>
<div class="wm" style="left:46px;top:173.4px">蒋佳豪 6350</div>
<div class="wm" style="left:197px;top:254.60000000000002px">蒋佳豪 6350</div>
<div class="wm" style="left:348px;top:173.4px">蒋佳豪 6350</div>
<div class="wm" style="left:499px;top:254.60000000000002px">蒋佳豪 6350</div>
<div class="wm" style="left:650px;top:173.4px">蒋佳豪 6350</div>
<div class="wm" style="left:801px;top:254.60000000000002px">蒋佳豪 6350</div>
<div class="wm" style="left:952px;top:173.4px">蒋佳豪 6350</div>
<div class="wm" style="left:1103px;top:254.60000000000002px">蒋佳豪 6350</div>
<div class="wm" style="left:1254px;top:173.4px">蒋佳豪 6350</div>
<div class="wm" style="left:1405px;top:254.60000000000002px">蒋佳豪 6350</div>
<div class="wm" style="left:1556px;top:173.4px">蒋佳豪 6350</div>
<div class="wm" style="left:1707px;top:254.60000000000002px">蒋佳豪 6350</div>
<div class="wm" style="left:-256px;top:335.8px">蒋佳豪 6350</div>
<div class="wm" style="left:-105px;top:417.0px">蒋佳豪 6350</div>
<div class="wm" style="left:46px;top:335.8px">蒋佳豪 6350</div>
<div class="wm" style="left:197px;top:417.0px">蒋佳豪 6350</div>
<div class="wm" style="left:348px;top:335.8px">蒋佳豪 6350</div>
<div class="wm" style="left:499px;top:417.0px">蒋佳豪 6350</div>
<div class="wm" style="left:650px;top:335.8px">蒋佳豪 6350</div>
<div class="wm" style="left:801px;top:417.0px">蒋佳豪 6350</div>
<div class="wm" style="left:952px;top:335.8px">蒋佳豪 6350</div>
<div class="wm" style="left:1103px;top:417.0px">蒋佳豪 6350</div>
<div class="wm" style="left:1254px;top:335.8px">蒋佳豪 6350</div>
<div class="wm" style="left:1405px;top:417.0px">蒋佳豪 6350</div>
<div class="wm" style="left:1556px;top:335.8px">蒋佳豪 6350</div>
<div class="wm" style="left:1707px;top:417.0px">蒋佳豪 6350</div>
<div class="wm" style="left:-256px;top:498.20000000000005px">蒋佳豪 6350</div>
<div class="wm" style="left:-105px;top:579.4000000000001px">蒋佳豪 6350</div>
<div class="wm" style="left:46px;top:498.20000000000005px">蒋佳豪 6350</div>
<div class="wm" style="left:197px;top:579.4000000000001px">蒋佳豪 6350</div>
<div class="wm" style="left:348px;top:498.20000000000005px">蒋佳豪 6350</div>
<div class="wm" style="left:499px;top:579.4000000000001px">蒋佳豪 6350</div>
<div class="wm" style="left:650px;top:498.20000000000005px">蒋佳豪 6350</div>
<div class="wm" style="left:801px;top:579.4000000000001px">蒋佳豪 6350</div>
<div class="wm" style="left:952px;top:498.20000000000005px">蒋佳豪 6350</div>
<div class="wm" style="left:1103px;top:579.4000000000001px">蒋佳豪 6350</div>
<div class="wm" style="left:1254px;top:498.20000000000005px">蒋佳豪 6350</div>
<div class="wm" style="left:1405px;top:579.4000000000001px">蒋佳豪 6350</div>
<div class="wm" style="left:1556px;top:498.20000000000005px">蒋佳豪 6350</div>
<div class="wm" style="left:1707px;top:579.4000000000001px">蒋佳豪 6350</div>
<div class="wm" style="left:-256px;top:660.6px">蒋佳豪 6350</div>
<div class="wm" style="left:-105px;top:741.8000000000001px">蒋佳豪 6350</div>
<div class="wm" style="left:46px;top:660.6px">蒋佳豪 6350</div>
<div class="wm" style="left:197px;top:741.8000000000001px">蒋佳豪 6350</div>
<div class="wm" style="left:348px;top:660.6px">蒋佳豪 6350</div>
<div class="wm" style="left:499px;top:741.8000000000001px">蒋佳豪 6350</div>
<div class="wm" style="left:650px;top:660.6px">蒋佳豪 6350</div>
<div class="wm" style="left:801px;top:741.8000000000001px">蒋佳豪 6350</div>
<div class="wm" style="left:952px;top:660.6px">蒋佳豪 6350</div>
<div class="wm" style="left:1103px;top:741.8000000000001px">蒋佳豪 6350</div>
<div class="wm" style="left:1254px;top:660.6px">蒋佳豪 6350</div>
<div class="wm" style="left:1405px;top:741.8000000000001px">蒋佳豪 6350</div>
<div class="wm" style="left:1556px;top:660.6px">蒋佳豪 6350</div>
<div class="wm" style="left:1707px;top:741.8000000000001px">蒋佳豪 6350</div>
<div class="wm" style="left:-256px;top:823.0px">蒋佳豪 6350</div>
<div class="wm" style="left:-105px;top:904.2px">蒋佳豪 6350</div>
<div class="wm" style="left:46px;top:823.0px">蒋佳豪 6350</div>
<div class="wm" style="left:197px;top:904.2px">蒋佳豪 6350</div>
<div class="wm" style="left:348px;top:823.0px">蒋佳豪 6350</div>
<div class="wm" style="left:499px;top:904.2px">蒋佳豪 6350</div>
<div class="wm" style="left:650px;top:823.0px">蒋佳豪 6350</div>
<div class="wm" style="left:801px;top:904.2px">蒋佳豪 6350</div>
<div class="wm" style="left:952px;top:823.0px">蒋佳豪 6350</div>
<div class="wm" style="left:1103px;top:904.2px">蒋佳豪 6350</div>
<div class="wm" style="left:1254px;top:823.0px">蒋佳豪 6350</div>
<div class="wm" style="left:1405px;top:904.2px">蒋佳豪 6350</div>
<div class="wm" style="left:1556px;top:823.0px">蒋佳豪 6350</div>
<div class="wm" style="left:1707px;top:904.2px">蒋佳豪 6350</div>
<div class="wm" style="left:-256px;top:985.4000000000001px">蒋佳豪 6350</div>
<div class="wm" style="left:-105px;top:1066.6000000000001px">蒋佳豪 6350</div>
<div class="wm" style="left:46px;top:985.4000000000001px">蒋佳豪 6350</div>
<div class="wm" style="left:197px;top:1066.6000000000001px">蒋佳豪 6350</div>
<div class="wm" style="left:348px;top:985.4000000000001px">蒋佳豪 6350</div>
<div class="wm" style="left:499px;top:1066.6000000000001px">蒋佳豪 6350</div>
<div class="wm" style="left:650px;top:985.4000000000001px">蒋佳豪 6350</div>
<div class="wm" style="left:801px;top:1066.6000000000001px">蒋佳豪 6350</div>
<div class="wm" style="left:952px;top:985.4000000000001px">蒋佳豪 6350</div>
<div class="wm" style="left:1103px;top:1066.6000000000001px">蒋佳豪 6350</div>
<div class="wm" style="left:1254px;top:985.4000000000001px">蒋佳豪 6350</div>
<div class="wm" style="left:1405px;top:1066.6000000000001px">蒋佳豪 6350</div>
<div class="wm" style="left:1556px;top:985.4000000000001px">蒋佳豪 6350</div>
<div class="wm" style="left:1707px;top:1066.6000000000001px">蒋佳豪 6350</div>
<svg class="anno" width="1280" height="927">
<rect x="379.2" y="155.3" width="214.1" height="81.3" rx="5" ry="5" fill="none" stroke="#f23b35" stroke-width="3.6"/>
<polygon points="784,128.2 785.6,130.4 722.8,171.6 725,177.2 694.6,178.4 711,155.4 716.4,160.4" fill="#f24c48" stroke="#f24c48" stroke-width="3" stroke-linejoin="round"/>
</svg>
</body></html>
